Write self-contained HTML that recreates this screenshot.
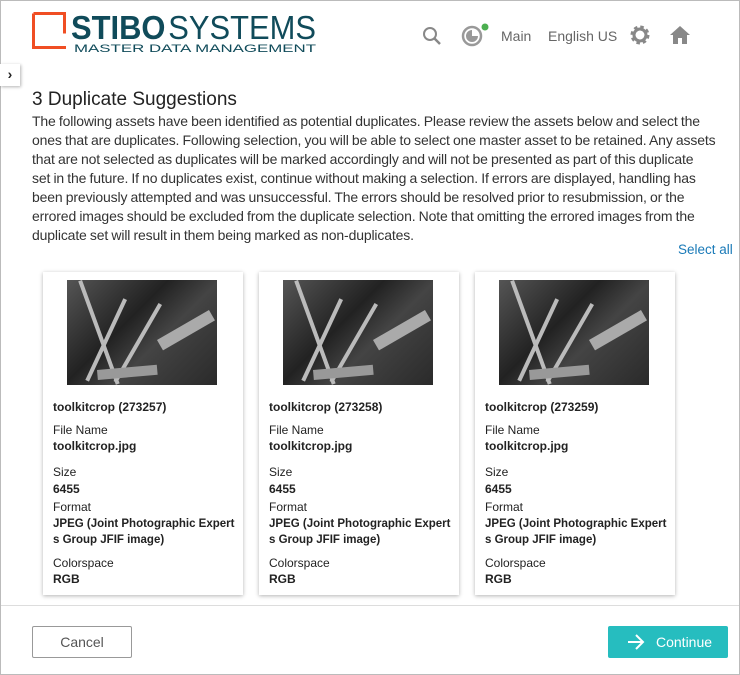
<!DOCTYPE html>
<html><head><style>
body{margin:0;width:740px;height:675px;font-family:"Liberation Sans",sans-serif;background:#fff;position:relative;overflow:hidden;color:#222}
.frame{position:absolute;left:0;top:0;width:738px;height:673px;border:1px solid #bbb}
.a{position:absolute}
.hdr{color:#666;font-size:14px}
.para{left:32px;top:112px;width:700px;font-size:14px;line-height:19px;color:#333;letter-spacing:-0.15px;word-spacing:-0.5px}
.card{position:absolute;top:272px;width:200px;height:323px;background:#fff;box-shadow:0 1px 4px rgba(0,0,0,.3)}
.img{position:absolute;left:24px;top:8px;width:150px;height:105px;background:linear-gradient(135deg,#555,#222 40%,#444 60%,#2a2a2a);overflow:hidden}
.img i{position:absolute;background:#bbb;height:4px;transform-origin:0 0}
.card .t{position:absolute;left:10px;font-size:12px;color:#222}
.b{font-weight:bold}
</style></head><body>
<div class="frame"></div>
<svg class="a" style="left:30px;top:8px" width="290" height="50">
<path d="M3.5 5.5h31v20M34.5 38v1.5h-31v-34" fill="none" stroke="#f04e23" stroke-width="3"/>
<text x="41" y="31" textLength="245" lengthAdjust="spacingAndGlyphs" font-family="Liberation Sans" font-size="33" fill="#104b5a"><tspan font-weight="bold">STIBO</tspan><tspan dx="3">SYSTEMS</tspan></text>
<text x="44" y="44" textLength="242" lengthAdjust="spacingAndGlyphs" font-family="Liberation Sans" font-size="11" fill="#104b5a">MASTER DATA MANAGEMENT</text>
</svg>
<svg class="a" style="left:422px;top:26px" width="20" height="20"><circle cx="8" cy="8" r="6" fill="none" stroke="#888" stroke-width="2"/><line x1="12" y1="12" x2="18" y2="18" stroke="#888" stroke-width="2.5"/></svg>
<svg class="a" style="left:461px;top:22px" width="30" height="26"><circle cx="11" cy="14" r="9" fill="none" stroke="#999" stroke-width="2.5"/><path d="M11 8a6 6 0 1 0 6 6h-6z" fill="#999"/><circle cx="24" cy="5" r="3.5" fill="#4caf50"/></svg>
<div class="a hdr" style="left:501px;top:28px">Main</div>
<div class="a hdr" style="left:548px;top:28px">English US</div>
<svg class="a" style="left:629px;top:24px" width="22" height="22" viewBox="0 0 22 22"><circle cx="11" cy="11" r="7" fill="none" stroke="#888" stroke-width="5" stroke-dasharray="3 2.5"/><circle cx="11" cy="11" r="6" fill="none" stroke="#888" stroke-width="3"/></svg>
<svg class="a" style="left:669px;top:25px" width="22" height="20"><path d="M11 1L1 10h3v9h5v-6h4v6h5v-9h3z" fill="#888"/></svg>
<div class="a" style="left:0;top:64px;width:20px;height:22px;background:#fff;box-shadow:1px 1px 3px rgba(0,0,0,.3);font-size:14px;font-weight:bold;text-align:center;line-height:20px">›</div>
<div class="a" style="left:32px;top:89px;font-size:19px;color:#222">3 Duplicate Suggestions</div>
<div class="a para">The following assets have been identified as potential duplicates. Please review the assets below and select the<br>ones that are duplicates. Following selection, you will be able to select one master asset to be retained. Any assets<br>that are not selected as duplicates will be marked accordingly and will not be presented as part of this duplicate<br>set in the future. If no duplicates exist, continue without making a selection. If errors are displayed, handling has<br>been previously attempted and was unsuccessful. The errors should be resolved prior to resubmission, or the<br>errored images should be excluded from the duplicate selection. Note that omitting the errored images from the<br>duplicate set will result in them being marked as non-duplicates.</div>
<div class="a" style="left:678px;top:242px;font-size:13.5px;color:#1a7ab8">Select all</div>

<div class="card" style="left:43px"><div class="img"><i style="left:15px;top:0;width:110px;transform:rotate(70deg)"></i><i style="left:60px;top:20px;width:90px;transform:rotate(115deg)"></i><i style="left:95px;top:25px;width:90px;transform:rotate(120deg)"></i><i style="left:30px;top:90px;width:60px;height:10px;transform:rotate(-5deg);background:#999"></i><i style="left:90px;top:60px;width:60px;height:12px;transform:rotate(-30deg);background:#aaa"></i></div>
<div class="t b" style="top:128px">toolkitcrop (273257)</div><div class="t" style="top:151px">File Name</div><div class="t b" style="top:167px">toolkitcrop.jpg</div><div class="t" style="top:193px">Size</div><div class="t b" style="top:210px">6455</div><div class="t" style="top:228px">Format</div><div class="t b" style="top:244px;width:185px;line-height:16px;font-size:11.5px">JPEG (Joint Photographic Expert<br>s Group JFIF image)</div><div class="t" style="top:284px">Colorspace</div><div class="t b" style="top:300px">RGB</div></div>

<div class="card" style="left:259px"><div class="img"><i style="left:15px;top:0;width:110px;transform:rotate(70deg)"></i><i style="left:60px;top:20px;width:90px;transform:rotate(115deg)"></i><i style="left:95px;top:25px;width:90px;transform:rotate(120deg)"></i><i style="left:30px;top:90px;width:60px;height:10px;transform:rotate(-5deg);background:#999"></i><i style="left:90px;top:60px;width:60px;height:12px;transform:rotate(-30deg);background:#aaa"></i></div>
<div class="t b" style="top:128px">toolkitcrop (273258)</div><div class="t" style="top:151px">File Name</div><div class="t b" style="top:167px">toolkitcrop.jpg</div><div class="t" style="top:193px">Size</div><div class="t b" style="top:210px">6455</div><div class="t" style="top:228px">Format</div><div class="t b" style="top:244px;width:185px;line-height:16px;font-size:11.5px">JPEG (Joint Photographic Expert<br>s Group JFIF image)</div><div class="t" style="top:284px">Colorspace</div><div class="t b" style="top:300px">RGB</div></div>

<div class="card" style="left:475px"><div class="img"><i style="left:15px;top:0;width:110px;transform:rotate(70deg)"></i><i style="left:60px;top:20px;width:90px;transform:rotate(115deg)"></i><i style="left:95px;top:25px;width:90px;transform:rotate(120deg)"></i><i style="left:30px;top:90px;width:60px;height:10px;transform:rotate(-5deg);background:#999"></i><i style="left:90px;top:60px;width:60px;height:12px;transform:rotate(-30deg);background:#aaa"></i></div>
<div class="t b" style="top:128px">toolkitcrop (273259)</div><div class="t" style="top:151px">File Name</div><div class="t b" style="top:167px">toolkitcrop.jpg</div><div class="t" style="top:193px">Size</div><div class="t b" style="top:210px">6455</div><div class="t" style="top:228px">Format</div><div class="t b" style="top:244px;width:185px;line-height:16px;font-size:11.5px">JPEG (Joint Photographic Expert<br>s Group JFIF image)</div><div class="t" style="top:284px">Colorspace</div><div class="t b" style="top:300px">RGB</div></div>

<div class="a" style="left:1px;top:605px;width:738px;height:1px;background:#ddd"></div>
<div class="a" style="left:32px;top:626px;width:98px;height:30px;border:1px solid #999;border-radius:2px;font-size:14px;color:#555;text-align:center;line-height:30px">Cancel</div>
<div class="a" style="left:608px;top:626px;width:120px;height:32px;background:#26bdbf;border-radius:2px;font-size:14px;color:#fff;line-height:32px">
<svg class="a" style="left:19px;top:8px" width="18" height="16"><path d="M1 8h15M9 1l7 7-7 7" fill="none" stroke="#fff" stroke-width="2"/></svg>
<span style="position:absolute;left:48px">Continue</span></div>
</body></html>
